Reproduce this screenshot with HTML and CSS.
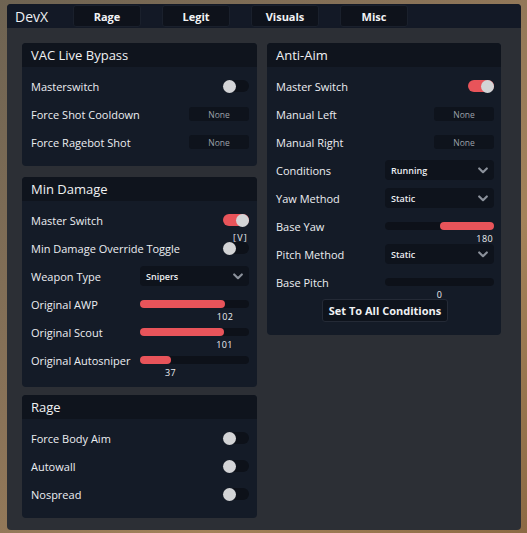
FILE: index.html
```html
<!DOCTYPE html>
<html>
<head>
<meta charset="utf-8">
<link rel="stylesheet" href="styles.css">
</head>
<body>
<div class="window">
  <div class="topbar">
    <div class="brand">DevX</div>
    <div class="tabs">
      <div class="tab">Rage</div>
      <div class="tab">Legit</div>
      <div class="tab">Visuals</div>
      <div class="tab">Misc</div>
    </div>
  </div>
  <div class="content">
    <div class="col">
      <section class="panel">
        <div class="panel-head">VAC Live Bypass</div>
        <div class="panel-body">
          <div class="row"><span class="label">Masterswitch</span><span class="toggle"><span class="knob"></span></span></div>
          <div class="row"><span class="label">Force Shot Cooldown</span><span class="bind">None</span></div>
          <div class="row"><span class="label">Force Ragebot Shot</span><span class="bind">None</span></div>
        </div>
      </section>
      <section class="panel panel-mid">
        <div class="panel-head">Min Damage</div>
        <div class="panel-body tall">
          <div class="row"><span class="label">Master Switch</span><span class="toggle on"><span class="knob"></span></span></div>
          <div class="row"><span class="label">Min Damage Override Toggle</span><span class="toggle"><span class="knob"></span><span class="key">[V]</span></span></div>
          <div class="row"><span class="label">Weapon Type</span><span class="select"><span>Snipers</span><svg class="chev" width="10" height="7" viewBox="0 0 10 7"><path d="M1.2 1.5 L5 5.2 L8.8 1.5" fill="none" stroke="#8a909a" stroke-width="2.2" stroke-linecap="round" stroke-linejoin="round"/></svg></span></div>
          <div class="row"><span class="label">Original AWP</span><span class="slider"><span class="fill" style="width:78%"></span><span class="val" style="left:78%">102</span></span></div>
          <div class="row"><span class="label">Original Scout</span><span class="slider"><span class="fill" style="width:77.5%"></span><span class="val" style="left:77.5%">101</span></span></div>
          <div class="row"><span class="label">Original Autosniper</span><span class="slider"><span class="fill" style="width:28%"></span><span class="val" style="left:28%">37</span></span></div>
        </div>
      </section>
      <section class="panel panel-last">
        <div class="panel-head">Rage</div>
        <div class="panel-body">
          <div class="row"><span class="label">Force Body Aim</span><span class="toggle"><span class="knob"></span></span></div>
          <div class="row"><span class="label">Autowall</span><span class="toggle"><span class="knob"></span></span></div>
          <div class="row"><span class="label">Nospread</span><span class="toggle"><span class="knob"></span></span></div>
        </div>
      </section>
    </div>
    <div class="col">
      <section class="panel">
        <div class="panel-head">Anti-Aim</div>
        <div class="panel-body tall right">
          <div class="row"><span class="label">Master Switch</span><span class="toggle on"><span class="knob"></span></span></div>
          <div class="row"><span class="label">Manual Left</span><span class="bind">None</span></div>
          <div class="row"><span class="label">Manual Right</span><span class="bind">None</span></div>
          <div class="row"><span class="label">Conditions</span><span class="select"><span>Running</span><svg class="chev" width="10" height="7" viewBox="0 0 10 7"><path d="M1.2 1.5 L5 5.2 L8.8 1.5" fill="none" stroke="#8a909a" stroke-width="2.2" stroke-linecap="round" stroke-linejoin="round"/></svg></span></div>
          <div class="row"><span class="label">Yaw Method</span><span class="select"><span>Static</span><svg class="chev" width="10" height="7" viewBox="0 0 10 7"><path d="M1.2 1.5 L5 5.2 L8.8 1.5" fill="none" stroke="#8a909a" stroke-width="2.2" stroke-linecap="round" stroke-linejoin="round"/></svg></span></div>
          <div class="row"><span class="label">Base Yaw</span><span class="slider"><span class="fill" style="left:50%;width:50%"></span><span class="val end">180</span></span></div>
          <div class="row"><span class="label">Pitch Method</span><span class="select"><span>Static</span><svg class="chev" width="10" height="7" viewBox="0 0 10 7"><path d="M1.2 1.5 L5 5.2 L8.8 1.5" fill="none" stroke="#8a909a" stroke-width="2.2" stroke-linecap="round" stroke-linejoin="round"/></svg></span></div>
          <div class="row"><span class="label">Base Pitch</span><span class="slider"><span class="val" style="left:50%">0</span></span></div>
          <div class="btn-row"><button class="btn">Set To All Conditions</button></div>
        </div>
      </section>
    </div>
  </div>
</div>
</body>
</html>
```

FILE: styles.css
```css
* { box-sizing: border-box; }
html, body { margin: 0; padding: 0; }
body {
  width: 527px;
  height: 533px;
  overflow: hidden;
  background: linear-gradient(135deg, #6e6352 0%, #8a7358 40%, #a3825a 70%, #8c6a44 100%);
  font-family: "Open Sans", "Noto Sans", sans-serif;
  color: #e6e8ec;
  padding: 4px 6px 3px 7px;
}
.window {
  width: 514px;
  height: 526px;
  background: #2c2f35;
  border-radius: 4px;
  overflow: hidden;
  display: flex;
  flex-direction: column;
}
.topbar {
  height: 24px;
  background: #131926;
  display: flex;
  align-items: center;
  flex-shrink: 0;
}
.brand {
  width: 66px;
  padding-left: 8px;
  font-size: 14px;
  font-weight: 500;
  color: #eef0f3;
}
.tabs {
  display: flex;
  gap: 21px;
}
.tab {
  width: 68px;
  height: 22px;
  background: #0e121b;
  border: 1px solid #1a202c;
  border-radius: 3px;
  display: flex;
  align-items: center;
  justify-content: center;
  font-size: 11px;
  font-weight: 700;
  color: #f2f3f5;
}
.content {
  display: grid;
  grid-template-columns: 235px 234px;
  column-gap: 10px;
  padding: 15px 20px 0 15px;
  align-items: start;
}
.col {
  display: flex;
  flex-direction: column;
}
.panel-mid { margin-top: 11px; }
.panel-last { margin-top: 8px; }
.panel {
  background: #141b27;
  border-radius: 4px;
  overflow: hidden;
}
.panel-head {
  height: 24px;
  background: #0f141d;
  display: flex;
  align-items: center;
  padding-left: 9px;
  font-size: 13px;
  font-weight: 500;
  color: #f0f1f3;
}
.panel-body {
  padding: 5px 8px 10px 9px;
}
.panel-body.tall { padding-bottom: 13px; }
.panel-body.right { padding-right: 7px; }
.row {
  height: 28px;
  display: flex;
  align-items: center;
  justify-content: space-between;
}
.label {
  font-size: 11px;
  color: #eceef2;
  white-space: nowrap;
}
.toggle {
  position: relative;
  width: 26px;
  height: 12px;
  border-radius: 6px;
  background: #0d1119;
  flex-shrink: 0;
}
.toggle .knob {
  position: absolute;
  top: -0.5px;
  left: 0;
  width: 13px;
  height: 13px;
  border-radius: 50%;
  background: #d3d4d6;
}
.toggle.on { background: #e8545a; }
.toggle.on .knob { left: auto; right: 0; }
.key {
  position: absolute;
  left: 10px;
  top: -11px;
  font-size: 9px;
  font-weight: 500;
  letter-spacing: 1.2px;
  color: #e6e8ec;
  white-space: nowrap;
}
.bind {
  width: 60px;
  height: 14px;
  background: #0e131c;
  border-radius: 3px;
  display: flex;
  align-items: center;
  justify-content: center;
  font-size: 8.5px;
  color: #9ba0a8;
}
.select {
  width: 109px;
  height: 20px;
  background: #0e131c;
  border-radius: 4px;
  display: flex;
  align-items: center;
  justify-content: space-between;
  padding: 0 6px 0 6px;
  font-size: 9px;
  font-weight: 600;
  color: #eceef1;
}
.chev { display: block; }
.slider {
  position: relative;
  width: 109px;
  height: 8px;
  border-radius: 4px;
  background: #0d1119;
}
.fill {
  position: absolute;
  top: 0;
  left: 0;
  height: 8px;
  border-radius: 4px;
  background: #e8545a;
}
.val {
  position: absolute;
  top: 10px;
  transform: translateX(-50%);
  font-size: 9px;
  font-weight: 500;
  letter-spacing: 0.4px;
  color: #eceef1;
}
.val.end { left: auto; right: 1px; transform: none; }
.btn-row {
  display: flex;
  justify-content: center;
  margin-top: 3px;
}
.btn {
  width: 126px;
  height: 23px;
  background: #0e131c;
  border: 1px solid #242a36;
  border-radius: 3px;
  font-family: "Open Sans", "Noto Sans", sans-serif;
  font-size: 11px;
  font-weight: 700;
  color: #f0f1f3;
  padding: 0;
}
```
